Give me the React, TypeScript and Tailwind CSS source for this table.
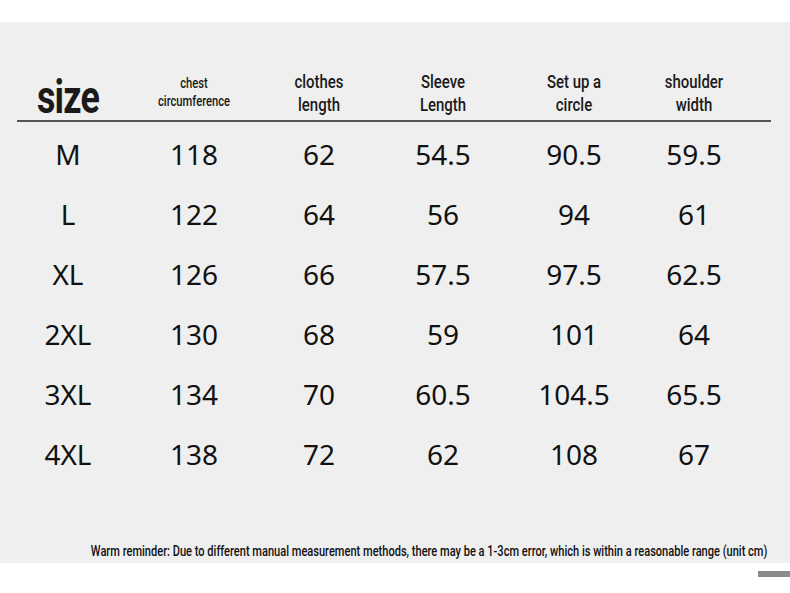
import React from 'react';

const narrow = { fontFamily: 'Roboto, "Liberation Sans", sans-serif' };
const digits = { fontFamily: '"Noto Sans", "Open Sans", sans-serif' };

const rows = [
    ['M', '118', '62', '54.5', '90.5', '59.5'],
    ['L', '122', '64', '56', '94', '61'],
    ['XL', '126', '66', '57.5', '97.5', '62.5'],
    ['2XL', '130', '68', '59', '101', '64'],
    ['3XL', '134', '70', '60.5', '104.5', '65.5'],
    ['4XL', '138', '72', '62', '108', '67'],
];

const cols = 'grid grid-cols-[136px_116px_134px_114px_148px_92px]';

const Head = ({ a, b }: { a: string; b: string }) => (
    <div className="text-center text-[18px] font-medium leading-[23px] pb-[4px] scale-x-[0.83]">
        <div>{a}</div>
        <div>{b}</div>
    </div>
);

export default function App() {
    return (
        <div className="w-[790px] h-[593px] bg-white pt-[22px] overflow-hidden">
            <div className="h-[541px] bg-[#efefef] flex flex-col">
                {/* header */}
                <div className={`${cols} items-end h-[98px] text-[#1a1a1a]`} style={narrow}>
                    <div className="text-center text-[46px] font-bold leading-none pb-[0px] tracking-[-1px] scale-x-[0.78]">size</div>
                    <div className="text-center text-[14px] font-medium leading-[18px] pb-[10px] scale-x-[0.8]">
                        <div>chest</div>
                        <div>circumference</div>
                    </div>
                    <Head a="clothes" b="length" />
                    <Head a="Sleeve" b="Length" />
                    <Head a="Set up a" b="circle" />
                    <Head a="shoulder" b="width" />
                </div>
                <div className="ml-[17px] w-[754px] h-[2px] bg-[#555]" />

                {/* rows */}
                <div className="mt-[2px]" style={digits}>
                    {rows.map((r) => (
                        <div key={r[0]} className={`${cols} h-[60px] items-center text-[28px] text-[#111]`}>
                            {r.map((v, i) => (
                                <div key={i} className="text-center leading-none">{v}</div>
                            ))}
                        </div>
                    ))}
                </div>

                <div className="mt-auto mb-[3px] flex justify-end pr-[23px]">
                    <p className="whitespace-nowrap text-[14px] font-medium text-[#111] leading-[18px] origin-right scale-x-[0.79]" style={narrow}>
                        Warm reminder: Due to different manual measurement methods, there may be a 1-3cm error, which is within a reasonable range (unit cm)
                    </p>
                </div>
            </div>
            <div className="flex justify-end mt-[8px]">
                <div className="w-[32px] h-[6px] bg-[#8a8a8a]" />
            </div>
        </div>
    );
}
